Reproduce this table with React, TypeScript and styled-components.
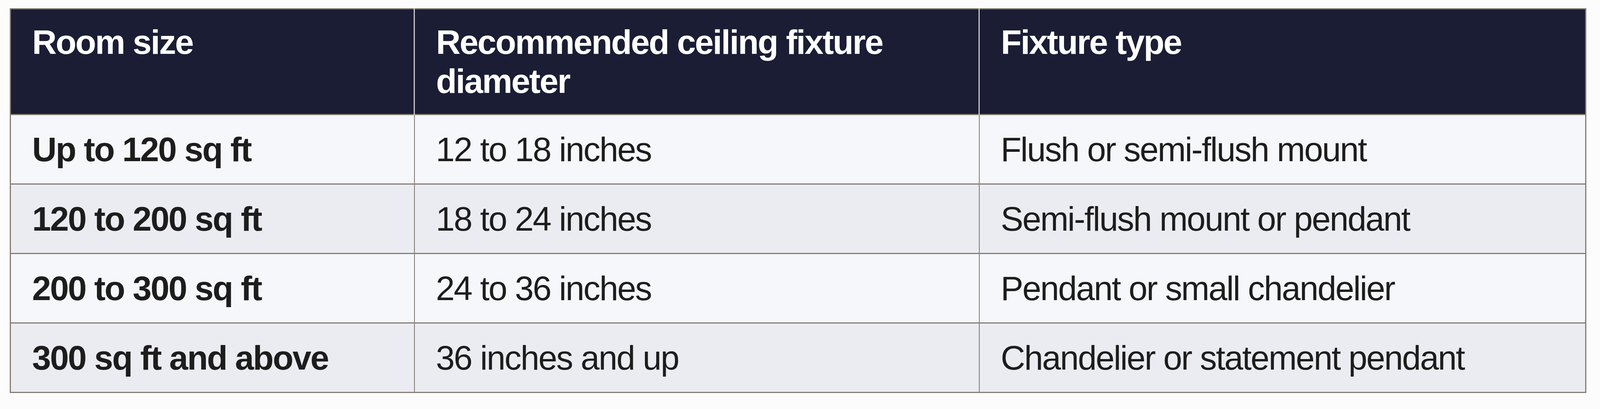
import React, { FC } from 'react';
import styled, { createGlobalStyle } from 'styled-components';

interface Row {
  size: string;
  diameter: string;
  type: string;
}

const rows: Row[] = [
  { size: 'Up to 120 sq ft', diameter: '12 to 18 inches', type: 'Flush or semi-flush mount' },
  { size: '120 to 200 sq ft', diameter: '18 to 24 inches', type: 'Semi-flush mount or pendant' },
  { size: '200 to 300 sq ft', diameter: '24 to 36 inches', type: 'Pendant or small chandelier' },
  { size: '300 sq ft and above', diameter: '36 inches and up', type: 'Chandelier or statement pendant' },
];

// column widths as share of the table
const columns = [
  { label: 'Room size', width: 25.64 },
  { label: 'Recommended ceiling fixture diameter', width: 35.85 },
  { label: 'Fixture type', width: 38.51 },
];

const GlobalStyle = createGlobalStyle`
  html, body {
    margin: 0;
    padding: 0;
    background: #fcfcfd;
    overflow: hidden;
  }
  body {
    font-family: "Liberation Sans", Arial, sans-serif;
  }
  *, *::before, *::after {
    box-sizing: border-box;
  }
`;

const Page = styled.div`
  padding: 21px 0 0 calc(100vw * 27 / 4385);
`;

const StyledTable = styled.table`
  border-collapse: collapse;
  table-layout: fixed;
  width: calc(100vw * 4321 / 4385);
  border: 3px solid #857d75;
  font-family: "Liberation Sans", Arial, sans-serif;
  font-size: 87px;
  line-height: 100px;
  letter-spacing: -2.6px;
`;

const HeadRow = styled.tr`
  height: 271px;
  background: #1b1d34;
`;

const HeadCell = styled.th<{ $width: number }>`
  width: ${({ $width }) => $width}%;
  padding: 34px 36px 0 54px;
  vertical-align: top;
  text-align: left;
  color: #ffffff;
  font-weight: 700;
  border-left: 3px solid #c9c6c2;
  &:first-child {
    border-left: none;
  }
`;

const BodyRow = styled.tr<{ $striped: boolean }>`
  height: 178px;
  background: ${({ $striped }) => ($striped ? '#ebecf1' : '#f6f7fa')};
  border-top: 3px solid #857d75;
`;

const BodyCell = styled.td<{ $bold?: boolean }>`
  padding: 0 36px 0 54px;
  vertical-align: middle;
  color: #1e1d1d;
  font-weight: ${({ $bold }) => ($bold ? 700 : 400)};
  border-left: 2px solid #7d7770;
  &:first-child {
    border-left: none;
  }
`;

const App: FC = () => {
  return (
    <>
      <GlobalStyle />
      <Page>
        <StyledTable>
          <thead>
            <HeadRow>
              {columns.map(col => (
                <HeadCell key={col.label} $width={col.width}>
                  {col.label}
                </HeadCell>
              ))}
            </HeadRow>
          </thead>
          <tbody>
            {rows.map((row, index) => (
              <BodyRow key={index} $striped={index % 2 === 1}>
                <BodyCell $bold>{row.size}</BodyCell>
                <BodyCell>{row.diameter}</BodyCell>
                <BodyCell>{row.type}</BodyCell>
              </BodyRow>
            ))}
          </tbody>
        </StyledTable>
      </Page>
    </>
  );
};

export default App;
